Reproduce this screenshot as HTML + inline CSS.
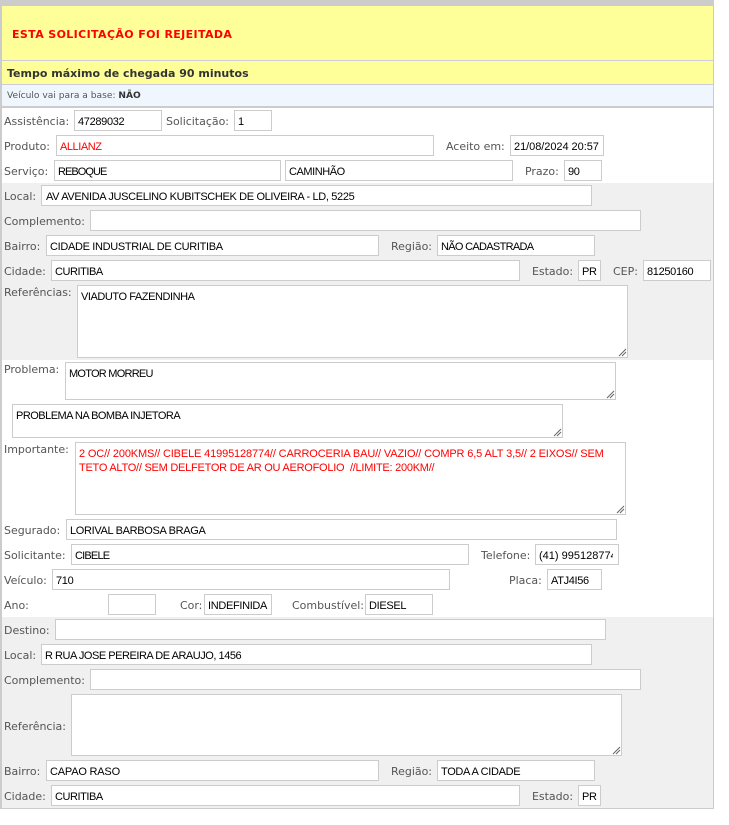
<!DOCTYPE html>
<html><head><meta charset="utf-8"><style>
html,body{margin:0;padding:0;background:#fff;width:729px;height:825px;overflow:hidden}
body{position:relative}
div{position:absolute;box-sizing:border-box;white-space:pre}
.l{font:11px/14px "DejaVu Sans",sans-serif;color:#555;letter-spacing:-.02px;margin-top:1px}
.i{background:#fff;border:1px solid #ccc;font:11px/14px "Liberation Sans",sans-serif;letter-spacing:-.33px;color:#000;padding:4px 0 0 3px;overflow:hidden;height:21px}
.t{background:#fff;border:1px solid #ccc;font:11px/14px "Liberation Sans",sans-serif;letter-spacing:-.33px;color:#000;padding:4px 0 0 3px;overflow:hidden}
svg{position:absolute}
</style></head><body>
<div style="left:0;top:0;width:714px;height:6px;background:#ccc"></div>
<div style="left:0;top:0;width:2px;height:809px;background:#ccc"></div>
<div style="left:713px;top:0;width:1px;height:809px;background:#ccc"></div>
<div style="left:2px;top:6px;width:711px;height:54px;background:#ffff99"></div>
<div style="left:2px;top:60px;width:711px;height:1px;background:#ccd"></div>
<div style="left:2px;top:61px;width:711px;height:23px;background:#ffff99"></div>
<div style="left:2px;top:84px;width:711px;height:1px;background:#ccd"></div>
<div style="left:2px;top:85px;width:711px;height:21px;background:#eff6fe"></div>
<div style="left:2px;top:106px;width:711px;height:2px;background:#ccc"></div>
<div style="left:2px;top:183px;width:711px;height:177px;background:#f0f0f0"></div>
<div style="left:2px;top:617px;width:711px;height:191px;background:#f0f0f0"></div>
<div style="left:0;top:808px;width:714px;height:1px;background:#ccc"></div>

<div style="left:12px;top:28px;font:bold 11px/14px 'DejaVu Sans',sans-serif;letter-spacing:.37px;color:#f00">ESTA SOLICITAÇÃO FOI REJEITADA</div>
<div style="left:7px;top:67px;font:bold 11px/14px 'DejaVu Sans',sans-serif;color:#333">Tempo máximo de chegada 90 minutos</div>
<div style="left:7px;top:90px;font:9.1px/13px 'DejaVu Sans',sans-serif;color:#555">Veículo vai para a base: <b style="color:#333">NÃO</b></div>

<div class="l" style="left:4px;top:114px">Assistência:</div>
<div class="i" style="left:74px;top:110px;width:88px">47289032</div>
<div class="l" style="left:166px;top:114px">Solicitação:</div>
<div class="i" style="left:234px;top:110px;width:38px">1</div>

<div class="l" style="left:4px;top:139px">Produto:</div>
<div class="i" style="left:56px;top:135px;width:378px;color:#f00;letter-spacing:-.45px">ALLIANZ</div>
<div class="l" style="left:446px;top:139px">Aceito em:</div>
<div class="i" style="left:510px;top:135px;width:94px;letter-spacing:-.05px">21/08/2024 20:57</div>

<div class="l" style="left:4px;top:164px">Serviço:</div>
<div class="i" style="left:54px;top:160px;width:227px;letter-spacing:-.95px">REBOQUE</div>
<div class="i" style="left:285px;top:160px;width:228px;letter-spacing:-.45px">CAMINHÃO</div>
<div class="l" style="left:525px;top:164px">Prazo:</div>
<div class="i" style="left:564px;top:160px;width:38px">90</div>

<div class="l" style="left:4px;top:189px">Local:</div>
<div class="i" style="left:41px;top:185px;width:551px;padding-left:4px;letter-spacing:-.35px">AV AVENIDA JUSCELINO KUBITSCHEK DE OLIVEIRA - LD, 5225</div>

<div class="l" style="left:4px;top:214px">Complemento:</div>
<div class="i" style="left:90px;top:210px;width:551px"></div>

<div class="l" style="left:4px;top:239px">Bairro:</div>
<div class="i" style="left:46px;top:235px;width:333px">CIDADE INDUSTRIAL DE CURITIBA</div>
<div class="l" style="left:391px;top:239px">Região:</div>
<div class="i" style="left:437px;top:235px;width:158px;letter-spacing:-.69px">NÃO CADASTRADA</div>

<div class="l" style="left:4px;top:264px">Cidade:</div>
<div class="i" style="left:51px;top:260px;width:469px;letter-spacing:-.45px">CURITIBA</div>
<div class="l" style="left:532px;top:264px">Estado:</div>
<div class="i" style="left:578px;top:260px;width:23px">PR</div>
<div class="l" style="left:613px;top:264px">CEP:</div>
<div class="i" style="left:643px;top:260px;width:68px">81250160</div>

<div class="l" style="left:4px;top:285px">Referências:</div>
<div class="t" style="left:77px;top:285px;width:551px;height:73px;letter-spacing:-.44px">VIADUTO FAZENDINHA</div>
<svg style="left:618px;top:348px" width="9" height="9"><path d="M1 8L8 1M4 8L8 4" stroke="#666" stroke-width="1" fill="none"/></svg>

<div class="l" style="left:4px;top:362px">Problema:</div>
<div class="t" style="left:65px;top:362px;width:551px;height:38px;letter-spacing:-.75px">MOTOR MORREU</div>
<svg style="left:606px;top:390px" width="9" height="9"><path d="M1 8L8 1M4 8L8 4" stroke="#666" stroke-width="1" fill="none"/></svg>

<div class="t" style="left:12px;top:404px;width:551px;height:34px;letter-spacing:-.52px">PROBLEMA NA BOMBA INJETORA</div>
<svg style="left:553px;top:428px" width="9" height="9"><path d="M1 8L8 1M4 8L8 4" stroke="#666" stroke-width="1" fill="none"/></svg>

<div class="l" style="left:4px;top:442px">Importante:</div>
<div class="t" style="left:75px;top:442px;width:551px;height:73px;color:#f00"><span style="letter-spacing:-.14px">2 OC// 200KMS// CIBELE 41995128774// CARROCERIA BAU// VAZIO// COMPR 6,5 ALT 3,5// 2 EIXOS// SEM</span>
<span style="letter-spacing:-.25px">TETO ALTO// SEM DELFETOR DE AR OU AEROFOLIO  //LIMITE: 200KM//</span></div>
<svg style="left:616px;top:505px" width="9" height="9"><path d="M1 8L8 1M4 8L8 4" stroke="#666" stroke-width="1" fill="none"/></svg>

<div class="l" style="left:4px;top:523px">Segurado:</div>
<div class="i" style="left:66px;top:519px;width:551px">LORIVAL BARBOSA BRAGA</div>

<div class="l" style="left:4px;top:548px">Solicitante:</div>
<div class="i" style="left:71px;top:544px;width:398px;letter-spacing:-.8px">CIBELE</div>
<div class="l" style="left:481px;top:548px">Telefone:</div>
<div class="i" style="left:535px;top:544px;width:84px;letter-spacing:0"><span style="display:block;width:74px;overflow:hidden">(41) 995128774</span></div>

<div class="l" style="left:4px;top:573px">Veículo:</div>
<div class="i" style="left:52px;top:569px;width:398px">710</div>
<div class="l" style="left:509px;top:573px">Placa:</div>
<div class="i" style="left:547px;top:569px;width:55px">ATJ4I56</div>

<div class="l" style="left:4px;top:598px">Ano:</div>
<div class="i" style="left:108px;top:594px;width:48px"></div>
<div class="l" style="left:180px;top:598px">Cor:</div>
<div class="i" style="left:204px;top:594px;width:68px">INDEFINIDA</div>
<div class="l" style="left:292px;top:598px">Combustível:</div>
<div class="i" style="left:365px;top:594px;width:68px">DIESEL</div>

<div class="l" style="left:4px;top:623px">Destino:</div>
<div class="i" style="left:55px;top:619px;width:551px"></div>

<div class="l" style="left:4px;top:648px">Local:</div>
<div class="i" style="left:41px;top:644px;width:551px;letter-spacing:-.47px">R RUA JOSE PEREIRA DE ARAUJO, 1456</div>

<div class="l" style="left:4px;top:673px">Complemento:</div>
<div class="i" style="left:90px;top:669px;width:551px"></div>

<div class="l" style="left:4px;top:719px">Referência:</div>
<div class="t" style="left:71px;top:694px;width:551px;height:62px"></div>
<svg style="left:612px;top:746px" width="9" height="9"><path d="M1 8L8 1M4 8L8 4" stroke="#666" stroke-width="1" fill="none"/></svg>

<div class="l" style="left:4px;top:764px">Bairro:</div>
<div class="i" style="left:46px;top:760px;width:333px;letter-spacing:-.2px">CAPAO RASO</div>
<div class="l" style="left:391px;top:764px">Região:</div>
<div class="i" style="left:437px;top:760px;width:158px">TODA A CIDADE</div>

<div class="l" style="left:4px;top:789px">Cidade:</div>
<div class="i" style="left:51px;top:785px;width:469px;letter-spacing:-.45px">CURITIBA</div>
<div class="l" style="left:532px;top:789px">Estado:</div>
<div class="i" style="left:578px;top:785px;width:23px">PR</div>
</body></html>
